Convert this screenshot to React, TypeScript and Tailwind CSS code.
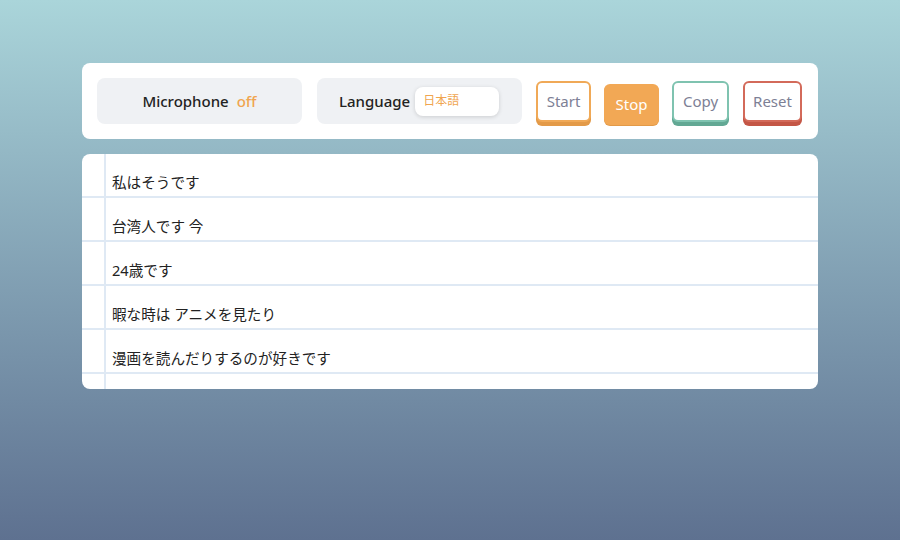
const lines = [
  "私はそうです",
  "台湾人です 今",
  "24歳です",
  "暇な時は アニメを見たり",
  "漫画を読んだりするのが好きです",
];

const App = () => {
  return (
    <div
      className="w-[900px] h-[540px] bg-gradient-to-b from-[#aad5da] to-[#5e7190] pt-[63px] px-[82px]"
      style={{ fontFamily: '"Noto Sans", "Noto Sans CJK JP", sans-serif' }}
    >
      {/* controls */}
      <div className="bg-white rounded-lg h-[76px] flex items-center pl-[15px] pr-[15px]">
        <div className="w-[205px] h-[46px] rounded-lg bg-[#eff1f4] flex items-center justify-center text-[15px] font-medium text-[#222]">
          Microphone
          <span className="ml-[8px] text-[#f0a54f]">off</span>
        </div>
        <div className="ml-[15px] w-[205px] h-[46px] rounded-lg bg-[#eff1f4] flex items-center pl-[22px] text-[15px] font-medium text-[#222]">
          Language
          <div className="ml-[5px] w-[84px] h-[29px] rounded-lg bg-white shadow-[0_1px_4px_rgba(0,0,0,0.15)] flex items-center pl-[8px] text-[12px] font-normal text-[#f0a54f]">
            日本語
          </div>
        </div>
        <div className="ml-[14px] mt-[4px] flex items-start h-[45px] gap-[13px]">
          <button className="w-[55px] h-[41px] rounded-md border-2 border-[#f0a957] bg-white shadow-[0_4px_0_#e39a48] text-[15px] text-[#7d8095]">
            Start
          </button>
          <button className="mt-[3px] w-[55px] h-[41px] rounded-md bg-[#f2a855] shadow-[0_1px_0_#e39a48] text-[15px] text-white">
            Stop
          </button>
          <button className="w-[57px] h-[41px] rounded-md border-2 border-[#7fc3b0] bg-white shadow-[0_4px_0_#62a894] text-[15px] text-[#7d8095]">
            Copy
          </button>
          <button className="ml-[1px] w-[59px] h-[41px] rounded-md border-2 border-[#d36a5a] bg-white shadow-[0_4px_0_#c45646] text-[15px] text-[#7d8095]">
            Reset
          </button>
        </div>
      </div>

      {/* notebook */}
      <div className="mt-[15px] bg-white rounded-lg overflow-hidden h-[235px] relative">
        <div className="absolute left-[22px] top-0 bottom-0 w-[2px] bg-[#dfe9f4]" />
        {lines.map((t) => (
          <div
            key={t}
            className="h-[44px] border-b-2 border-[#dfe9f4] flex items-end pb-[2px] pl-[30px] text-[14.6px] text-[#222]"
          >
            {t}
          </div>
        ))}
      </div>
    </div>
  );
};

export default App;
